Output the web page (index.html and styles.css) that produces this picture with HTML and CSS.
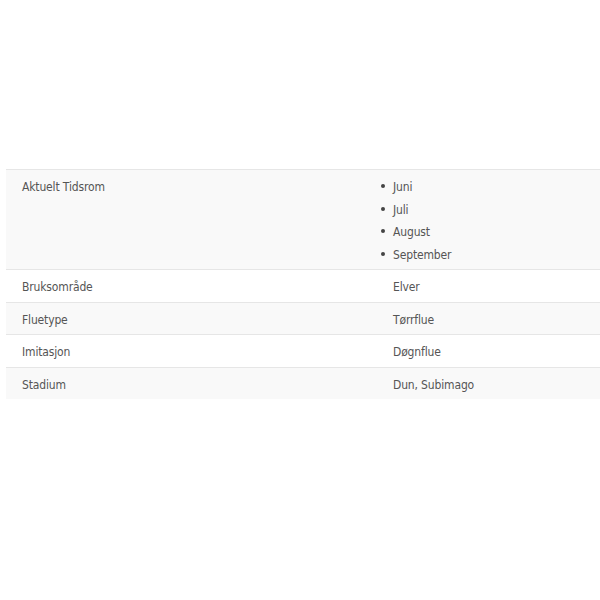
FILE: index.html
```html
<!DOCTYPE html>
<html>
<head>
<meta charset="utf-8">
<link rel="stylesheet" href="styles.css">
</head>
<body>
<div class="page">
  <table class="specs">
    <tbody>
      <tr class="odd">
        <th>Aktuelt Tidsrom</th>
        <td>
          <ul class="months">
            <li>Juni</li>
            <li>Juli</li>
            <li>August</li>
            <li>September</li>
          </ul>
        </td>
      </tr>
      <tr class="even">
        <th>Bruksområde</th>
        <td>Elver</td>
      </tr>
      <tr class="odd">
        <th>Fluetype</th>
        <td>Tørrflue</td>
      </tr>
      <tr class="even">
        <th>Imitasjon</th>
        <td>Døgnflue</td>
      </tr>
      <tr class="odd">
        <th>Stadium</th>
        <td>Dun, Subimago</td>
      </tr>
    </tbody>
  </table>
</div>
</body>
</html>
```
FILE: styles.css
```css
html, body {
  margin: 0;
  padding: 0;
  background: #ffffff;
}
.page {
  padding: 169px 0 0 6px;
  width: 600px;
  overflow: hidden;
}
.specs {
  border-collapse: collapse;
  width: 620px;
  font-family: "DejaVu Sans Condensed", "Liberation Sans", sans-serif;
  font-size: 12px;
  letter-spacing: -0.15px;
  color: #555555;
  border-top: 1px solid #e6e6e6;
}
.specs tr {
  border-bottom: 1px solid #e6e6e6;
}
.specs tr:last-child {
  border-bottom: none;
}
.specs tr.odd {
  background: #f9f9f9;
}
.specs tr.even {
  background: #ffffff;
}
.specs th,
.specs td {
  text-align: left;
  font-weight: normal;
  vertical-align: top;
  padding: 6px 16px 3px 16px;
  line-height: 22.5px;
}
.specs th {
  width: 339px;
}
.months {
  margin: 0;
  padding: 0;
  list-style: none;
}
.months li::before {
  content: "";
  display: inline-block;
  width: 4px;
  height: 4px;
  border-radius: 50%;
  background: #444444;
  margin-left: -12px;
  margin-right: 8px;
  vertical-align: 3px;
}
```
